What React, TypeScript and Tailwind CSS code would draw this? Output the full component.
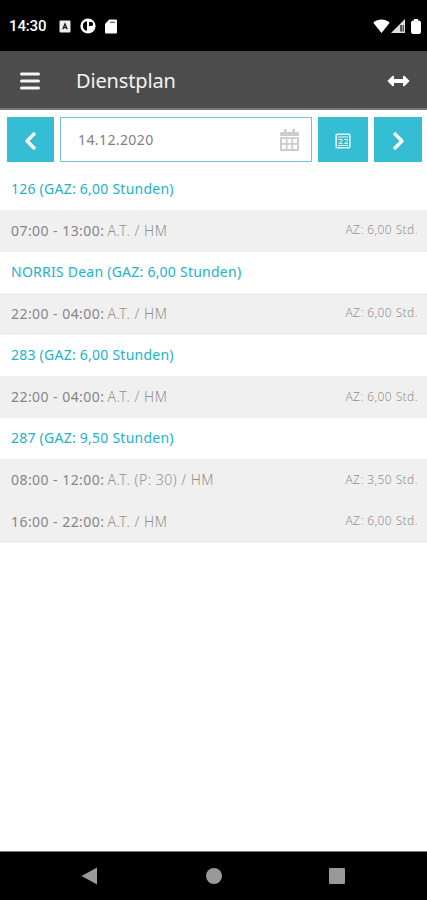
type Shift = {
  time: string;
  detail: string;
  hours: string;
};

type Employee = {
  name: string;
  shifts: Shift[];
};

const employees: Employee[] = [
  {
    name: "126 (GAZ: 6,00 Stunden)",
    shifts: [{ time: "07:00 - 13:00:", detail: "A.T. / HM", hours: "6,00" }],
  },
  {
    name: "NORRIS Dean (GAZ: 6,00 Stunden)",
    shifts: [{ time: "22:00 - 04:00:", detail: "A.T. / HM", hours: "6,00" }],
  },
  {
    name: "283 (GAZ: 6,00 Stunden)",
    shifts: [{ time: "22:00 - 04:00:", detail: "A.T. / HM", hours: "6,00" }],
  },
  {
    name: "287 (GAZ: 9,50 Stunden)",
    shifts: [
      { time: "08:00 - 12:00:", detail: "A.T. (P: 30) / HM", hours: "3,50" },
      { time: "16:00 - 22:00:", detail: "A.T. / HM", hours: "6,00" },
    ],
  },
];

function StatusBar() {
  return (
    <div className="flex h-[51px] shrink-0 items-center bg-black pl-[9px] pr-[6px] pt-[1px] text-white">
      <span className="w-[50px] font-[Roboto] text-[15px] font-medium tracking-[-0.15px]">
        14:30
      </span>
      <svg width="12" height="13" viewBox="0 0 12 13">
        <rect x="0.5" y="0.5" width="11" height="12" rx="1" fill="#eee" />
        <path
          d="M3.8 9.2 6 3.8l2.2 5.4M4.6 7.6h2.8"
          stroke="#111"
          strokeWidth="1.2"
          fill="none"
        />
      </svg>
      <svg className="ml-[9px]" width="16" height="16" viewBox="0 0 16 16">
        <circle cx="8" cy="8" r="7.6" fill="#fff" />
        <path d="M7 3.200v9.600L4.500 12 3 9.500V6l1.500-2z" fill="#000" />
        <path d="M9 4h2.400a1.600 1.600 0 0 1 1.600 1.600v.8A1.600 1.600 0 0 1 11.400 8H9z" fill="#000" />
      </svg>
      <svg className="ml-[9px]" width="12" height="15" viewBox="0 0 12 15">
        <path
          d="M4.2.5H11a1 1 0 0 1 1 1v12a1 1 0 0 1-1 1H1a1 1 0 0 1-1-1V5z"
          fill="#fff"
        />
        <path d="M5 3.4h5" stroke="#666" strokeWidth="1.2" />
      </svg>
      <svg className="ml-auto" width="17" height="14" viewBox="0 0 17 14">
        <path d="M.3 3.7C5-.7 12-.7 16.7 3.7L8.5 14z" fill="#fff" />
      </svg>
      <svg className="ml-[1px]" width="14" height="14" viewBox="0 0 14 14">
        <path d="M14 0v14H0z" fill="#ddd" />
        <path d="M9 6h4v6.5H9z" fill="#555" />
        <path d="M11.5 6v6" stroke="#999" />
      </svg>
      <svg className="ml-[6px]" width="10" height="15" viewBox="0 0 10 15">
        <path
          d="M3 0h4v1.5h1.5L10 3v10.5L8.5 15h-7L0 13.5V3l1.5-1.5H3z"
          fill="#fff"
        />
      </svg>
    </div>
  );
}

function Header() {
  return (
    <header className="flex h-[59px] shrink-0 items-center border-b-2 border-[#777] bg-[#4c4c4c] pl-[20px] pr-[17px] pt-[2px] text-white">
      <svg width="20" height="18" viewBox="0 0 20 18">
        <path
          d="M1.5 2h17M1.5 9h17M1.5 16h17"
          stroke="#f4f4f4"
          strokeWidth="3"
          strokeLinecap="round"
        />
      </svg>
      <h1 className="ml-[36px] font-['Noto_Sans',sans-serif] text-[20px] tracking-[-0.15px] text-[#f2f2f2]">
        Dienstplan
      </h1>
      <svg className="ml-auto" width="23" height="12" viewBox="0 0 23 12">
        <path
          d="M.4 6 5.600.8Q7 .2 7 1.700V4h9V1.700Q16 .2 17.400.8L22.600 6l-5.200 5.200Q16 11.800 16 10.300V8H7v2.300Q7 11.800 5.600 11.200z"
          fill="#fff"
        />
      </svg>
    </header>
  );
}

function CalendarIcon() {
  return (
    <svg width="19" height="22" viewBox="0 0 19 22" fill="#ccc">
      <path d="M4 0h2.500v3h6V0H15v3h2.500Q19 3 19 4.500V7H0V4.500Q0 3 1.500 3H4z" />
      <path
        fillRule="evenodd"
        d="M0 8.200h19v12.300q0 1.500-1.500 1.500h-16Q0 22 0 20.500zM2 10v4h3.800v-4zM7.600 10v4h3.800v-4zM13.200 10v4H17v-4zM2 15.800V20h3.800v-4.200zM7.600 15.800V20h3.800v-4.200zM13.200 15.800V20H17v-4.200z"
      />
    </svg>
  );
}

function DateNavigation() {
  return (
    <div className="flex h-[58px] shrink-0 pl-[7px] pr-[5px] pt-[7px]">
      <button
        type="button"
        className="flex h-[45px] w-[47px] items-center justify-center bg-[#35bdd3] pt-[2px]"
      >
        <svg width="14" height="20" viewBox="0 0 14 20">
          <path
            d="M11 2 3 10l8 8"
            stroke="#fff"
            strokeWidth="3.4"
            strokeLinejoin="round"
            fill="none"
          />
        </svg>
      </button>
      <div className="ml-[6px] flex h-[45px] w-[252px] items-center justify-between border border-[#72c5d3] pl-[17px] pr-[12px]">
        <span className="font-['Noto_Sans',sans-serif] text-[14px] tracking-[0.4px] text-[#808080]">
          14.12.2020
        </span>
        <CalendarIcon />
      </div>
      <button
        type="button"
        className="ml-[6px] flex h-[45px] w-[50px] items-center justify-center bg-[#35bdd3] pt-[3px]"
      >
        <svg width="16" height="16" viewBox="0 0 16 16" fill="none">
          <rect x="1.2" y="1.2" width="13.6" height="13.6" rx="1" stroke="#e4f8fb" strokeWidth="1.6" />
          <path
            d="M3 4h10M3 12.500h10M3.500 6.500h3.500v1.500L4 10.500h3.500M9 6.500h3.500v1.500L9.500 10.500H13"
            stroke="#e4f8fb"
            strokeWidth="1"
          />
        </svg>
      </button>
      <button
        type="button"
        className="ml-[6px] flex h-[45px] w-[48px] items-center justify-center bg-[#35bdd3] pt-[2px]"
      >
        <svg width="14" height="20" viewBox="0 0 14 20">
          <path
            d="m3 2 8 8-8 8"
            stroke="#fff"
            strokeWidth="3.4"
            strokeLinejoin="round"
            fill="none"
          />
        </svg>
      </button>
    </div>
  );
}

function ShiftRow({ shift }: { shift: Shift }) {
  return (
    <div className="flex h-[41.6px] items-center justify-between bg-[#f0f0f0] pb-[1px] pl-[11px] pr-[9px] last:h-[42px]">
      <span className="flex gap-[3px] text-[14px]">
        <span className="tracking-[0.45px] text-[#868686]">{shift.time}</span>
        <span className="font-light tracking-[0.5px] text-[#909090]">
          {shift.detail}
        </span>
      </span>
      <span className="text-[12px] font-light tracking-[0.4px] text-[#909090]">
        AZ: {shift.hours} Std.
      </span>
    </div>
  );
}

function App() {
  return (
    <div className="flex h-[900px] w-[427px] flex-col overflow-hidden bg-white">
      <StatusBar />
      <Header />
      <DateNavigation />
      <main className="grow pt-[0.6px] font-['Noto_Sans',sans-serif]">
        {employees.map((employee) => (
          <section key={employee.name}>
            <h2 className="flex h-[41.2px] items-center pb-[2px] pl-[11px] text-[14px] tracking-[0.24px] text-[#20b3ca]">
              {employee.name}
            </h2>
            {employee.shifts.map((shift) => (
              <ShiftRow key={shift.time} shift={shift} />
            ))}
          </section>
        ))}
      </main>
      <nav className="flex h-[49px] shrink-0 items-center border-t border-[#777] bg-black px-[81px]">
        <svg width="17" height="18" viewBox="0 0 17 18">
          <path d="M.5 9 16 .5v17z" fill="#999" />
        </svg>
        <div className="ml-[108px] size-[16px] rounded-full bg-[#999]" />
        <div className="ml-[107px] size-[16px] rounded-[1px] bg-[#999]" />
      </nav>
    </div>
  );
}

export default App;
